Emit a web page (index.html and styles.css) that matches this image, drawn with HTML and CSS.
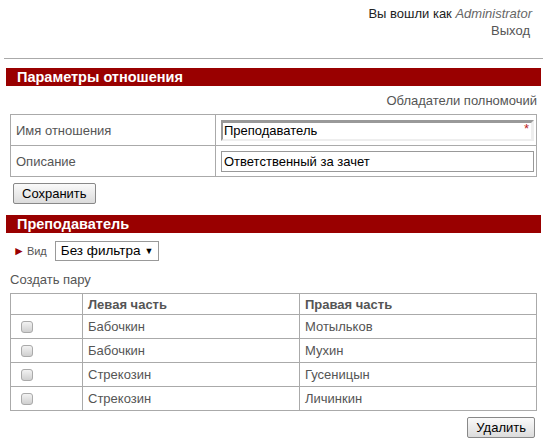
FILE: index.html
```html
<!DOCTYPE html>
<html lang="ru">
<head>
<meta charset="utf-8">
<link rel="stylesheet" href="styles.css">
</head>
<body>
<div class="page">
  <div class="userbar">
    <div>Вы вошли как <i class="user">Administrator</i></div>
    <div class="logout">Выход</div>
  </div>
  <div class="sep"></div>
  <div class="bar">Параметры отношения</div>
  <div class="owners">Обладатели полномочий</div>
  <table class="form">
    <tr>
      <td class="label">Имя отношения</td>
      <td class="field"><div class="input req">Преподаватель<span class="star">*</span></div></td>
    </tr>
    <tr>
      <td class="label">Описание</td>
      <td class="field"><div class="input">Ответственный за зачет</div></td>
    </tr>
  </table>
  <div class="save-row"><span class="btn">Сохранить</span></div>
  <div class="bar">Преподаватель</div>
  <div class="view">
    <span class="tri">&#9658;</span><span class="view-label">Вид</span>
    <span class="select"><span>Без фильтра</span><span class="caret">&#9660;</span></span>
  </div>
  <div class="create">Создать пару</div>
  <table class="grid">
    <tr class="head">
      <th class="chk"></th>
      <th>Левая часть</th>
      <th>Правая часть</th>
    </tr>
    <tr><td class="chk"><span class="box"></span></td><td>Бабочкин</td><td>Мотыльков</td></tr>
    <tr><td class="chk"><span class="box"></span></td><td>Бабочкин</td><td>Мухин</td></tr>
    <tr><td class="chk"><span class="box"></span></td><td>Стрекозин</td><td>Гусеницын</td></tr>
    <tr><td class="chk"><span class="box"></span></td><td>Стрекозин</td><td>Личинкин</td></tr>
  </table>
  <div class="actions"><span class="btn">Удалить</span></div>
</div>
</body>
</html>
```

FILE: styles.css
```css
html, body {
  margin: 0;
  padding: 0;
  background: #fff;
}
body {
  font-family: "Liberation Sans", Arial, sans-serif;
  font-size: 13px;
  color: #000;
}
.page {
  padding: 5px 7px 0 6px;
}
.userbar {
  display: flex;
  flex-direction: column;
  align-items: flex-end;
  padding-right: 9px;
  line-height: 17px;
  color: #222;
}
.user {
  color: #666;
}
.logout {
  color: #555;
  padding-right: 2px;
}
.sep {
  height: 1px;
  background: #aaa;
  margin: 19px -2px 9px -2px;
}
.bar {
  background: #990000;
  color: #fff;
  font-weight: bold;
  font-size: 14.5px;
  line-height: 18px;
  height: 18px;
  padding-left: 11px;
}
.owners {
  text-align: right;
  color: #555;
  padding-right: 4px;
  line-height: 17px;
  margin-top: 6px;
  margin-bottom: 5px;
}
.form, .grid {
  border-collapse: collapse;
  margin: 0 4px;
  width: calc(100% - 8px);
}
.form td {
  border: 1px solid #aaa;
  height: 30px;
  padding: 0;
}
.form .label {
  width: 199px;
  padding-left: 5px;
  color: #555;
}
.form .field {
  padding: 0 2px 0 5px;
}
.input {
  position: relative;
  border: 1px solid #999;
  height: 19px;
  line-height: 19px;
  padding-left: 2px;
  color: #000;
}
.input.req {
  border-top: 3px solid #999;
  border-left: 2px solid #999;
  border-right: 3px solid #eee;
  border-bottom: 2px solid #eee;
  height: 16px;
  line-height: 16px;
  padding-left: 1px;
}
.star {
  position: absolute;
  right: 2px;
  top: -2px;
  color: #b22;
  font-size: 13px;
}
.save-row {
  display: flex;
  padding: 6px 0 11px 7px;
}
.btn {
  display: block;
  border: 1px solid #888;
  border-radius: 2px;
  background: linear-gradient(#fafafa, #dcdcdc);
  padding: 0 8px;
  height: 19px;
  line-height: 19px;
  color: #000;
}
.view {
  display: flex;
  align-items: center;
  padding-left: 7px;
  margin-top: 8px;
  height: 20px;
}
.tri {
  color: #990000;
  font-size: 12px;
  margin-right: 2px;
}
.view-label {
  color: #555;
  font-size: 11px;
  margin-right: 8px;
}
.select {
  display: flex;
  align-items: center;
  border: 1px solid #999;
  height: 18px;
  line-height: 18px;
  padding: 0 5px 0 5px;
  color: #000;
  font-size: 13.5px;
  white-space: nowrap;
}
.caret {
  font-size: 9px;
  margin-left: 4px;
}
.create {
  color: #555;
  padding-left: 4px;
  margin-top: 10px;
  margin-bottom: 5px;
  line-height: 17px;
}
.grid th, .grid td {
  border: 1px solid #aaa;
  text-align: left;
  padding: 0 0 0 5px;
  height: 23px;
  color: #555;
}
.grid th {
  height: 20px;
  font-weight: bold;
}
.grid .chk {
  width: 61px;
  padding-left: 10px;
}
.grid th:nth-child(2) {
  width: 211px;
}
.box {
  display: block;
  width: 10px;
  height: 10px;
  border: 1px solid #aaa;
  border-radius: 3px;
  background: linear-gradient(#f2f2f2, #cfcfcf);
}
.actions {
  display: flex;
  justify-content: flex-end;
  padding: 6px 6px 0 0;
}
```
